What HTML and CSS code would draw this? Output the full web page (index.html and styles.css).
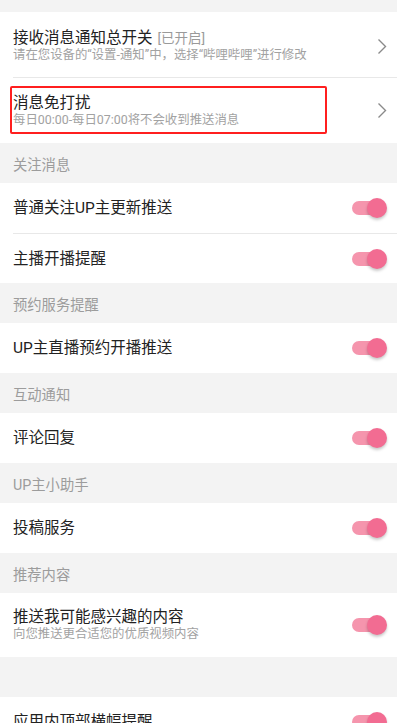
FILE: index.html
```html
<!DOCTYPE html>
<html lang="zh-CN">
<head>
<meta charset="utf-8">
<title>推送通知设置</title>
<link rel="stylesheet" href="styles.css">
</head>
<body>
<div class="page">
  <div class="top-gap"></div>

  <div class="group">
    <div class="item tall first">
      <div class="text">
        <div class="title">接收消息通知总开关<span class="state">[已开启]</span></div>
        <div class="sub">请在您设备的“设置-通知”中，选择“哔哩哔哩”进行修改</div>
      </div>
      <svg class="chev" width="10" height="17" viewBox="0 0 10 17"><path d="M1.5 1.5 L8.5 8.5 L1.5 15.5" fill="none" stroke="#8a8a8a" stroke-width="1.4"/></svg>
    </div>
    <div class="item tall">
      <div class="text">
        <div class="title">消息免打扰</div>
        <div class="sub">每日00:00-每日07:00将不会收到推送消息</div>
      </div>
      <svg class="chev" width="10" height="17" viewBox="0 0 10 17"><path d="M1.5 1.5 L8.5 8.5 L1.5 15.5" fill="none" stroke="#8a8a8a" stroke-width="1.4"/></svg>
      <div class="highlight"></div>
    </div>
  </div>

  <div class="section">关注消息</div>
  <div class="group">
    <div class="item">
      <div class="title">普通关注UP主更新推送</div>
      <div class="switch"><span class="track"></span><span class="thumb"></span></div>
    </div>
    <div class="item">
      <div class="title">主播开播提醒</div>
      <div class="switch"><span class="track"></span><span class="thumb"></span></div>
    </div>
  </div>

  <div class="section">预约服务提醒</div>
  <div class="group">
    <div class="item">
      <div class="title">UP主直播预约开播推送</div>
      <div class="switch"><span class="track"></span><span class="thumb"></span></div>
    </div>
  </div>

  <div class="section">互动通知</div>
  <div class="group">
    <div class="item">
      <div class="title">评论回复</div>
      <div class="switch"><span class="track"></span><span class="thumb"></span></div>
    </div>
  </div>

  <div class="section">UP主小助手</div>
  <div class="group">
    <div class="item">
      <div class="title">投稿服务</div>
      <div class="switch"><span class="track"></span><span class="thumb"></span></div>
    </div>
  </div>

  <div class="section">推荐内容</div>
  <div class="group">
    <div class="item tall2">
      <div class="text">
        <div class="title">推送我可能感兴趣的内容</div>
        <div class="sub">向您推送更合适您的优质视频内容</div>
      </div>
      <div class="switch"><span class="track"></span><span class="thumb"></span></div>
    </div>
  </div>

  <div class="blank"></div>
  <div class="group">
    <div class="item">
      <div class="title">应用内顶部横幅提醒</div>
      <div class="switch"><span class="track"></span><span class="thumb"></span></div>
    </div>
  </div>
</div>
</body>
</html>
```

FILE: styles.css
```css
html, body {
  margin: 0;
  padding: 0;
  background: #f3f3f3;
}
body {
  font-family: "Roboto", "Noto Sans CJK SC", sans-serif;
  color: #222;
}
.page {
  width: 397px;
  overflow: hidden;
}
.top-gap {
  height: 12px;
}
.blank {
  height: 40px;
}
.group {
  background: #fff;
}
.item {
  position: relative;
  margin-left: 13px;
  padding-right: 10px;
  height: 50px;
  box-sizing: border-box;
  display: flex;
  align-items: center;
  justify-content: space-between;
}
.item + .item {
  border-top: 1px solid #e8e8e8;
}
.item.tall {
  height: 65px;
  box-sizing: content-box;
}
.item.tall.first {
  height: 62px;
  padding-top: 3px;
}
.item.tall2 {
  height: 64px;
}
.text {
  display: flex;
  flex-direction: column;
}
.title {
  font-size: 15.5px;
  line-height: 18px;
  color: #222;
  white-space: nowrap;
}
.state {
  font-size: 13.5px;
  color: #9a9a9a;
  margin-left: 5px;
}
.sub {
  font-size: 12.4px;
  line-height: 16px;
  color: #a2a2a2;
  white-space: nowrap;
}
.chev {
  display: block;
}
.highlight {
  position: absolute;
  left: -3px;
  top: 8px;
  width: 317px;
  height: 48px;
  box-sizing: border-box;
  border: 2px solid #ff1f1f;
  border-radius: 2px;
}
.section {
  height: 40px;
  display: flex;
  align-items: center;
  padding-left: 13px;
  font-size: 14.3px;
  color: #9c9c9c;
}
.switch {
  position: relative;
  width: 35px;
  height: 20px;
  flex: none;
}
.track {
  position: absolute;
  left: 0;
  top: 3px;
  width: 28px;
  height: 14px;
  border-radius: 7px;
  background: #f595ad;
}
.thumb {
  position: absolute;
  right: 0;
  top: 0;
  width: 20px;
  height: 20px;
  border-radius: 50%;
  background: #f26c92;
  box-shadow: 0 2px 3px rgba(0, 0, 0, 0.22);
}
```
